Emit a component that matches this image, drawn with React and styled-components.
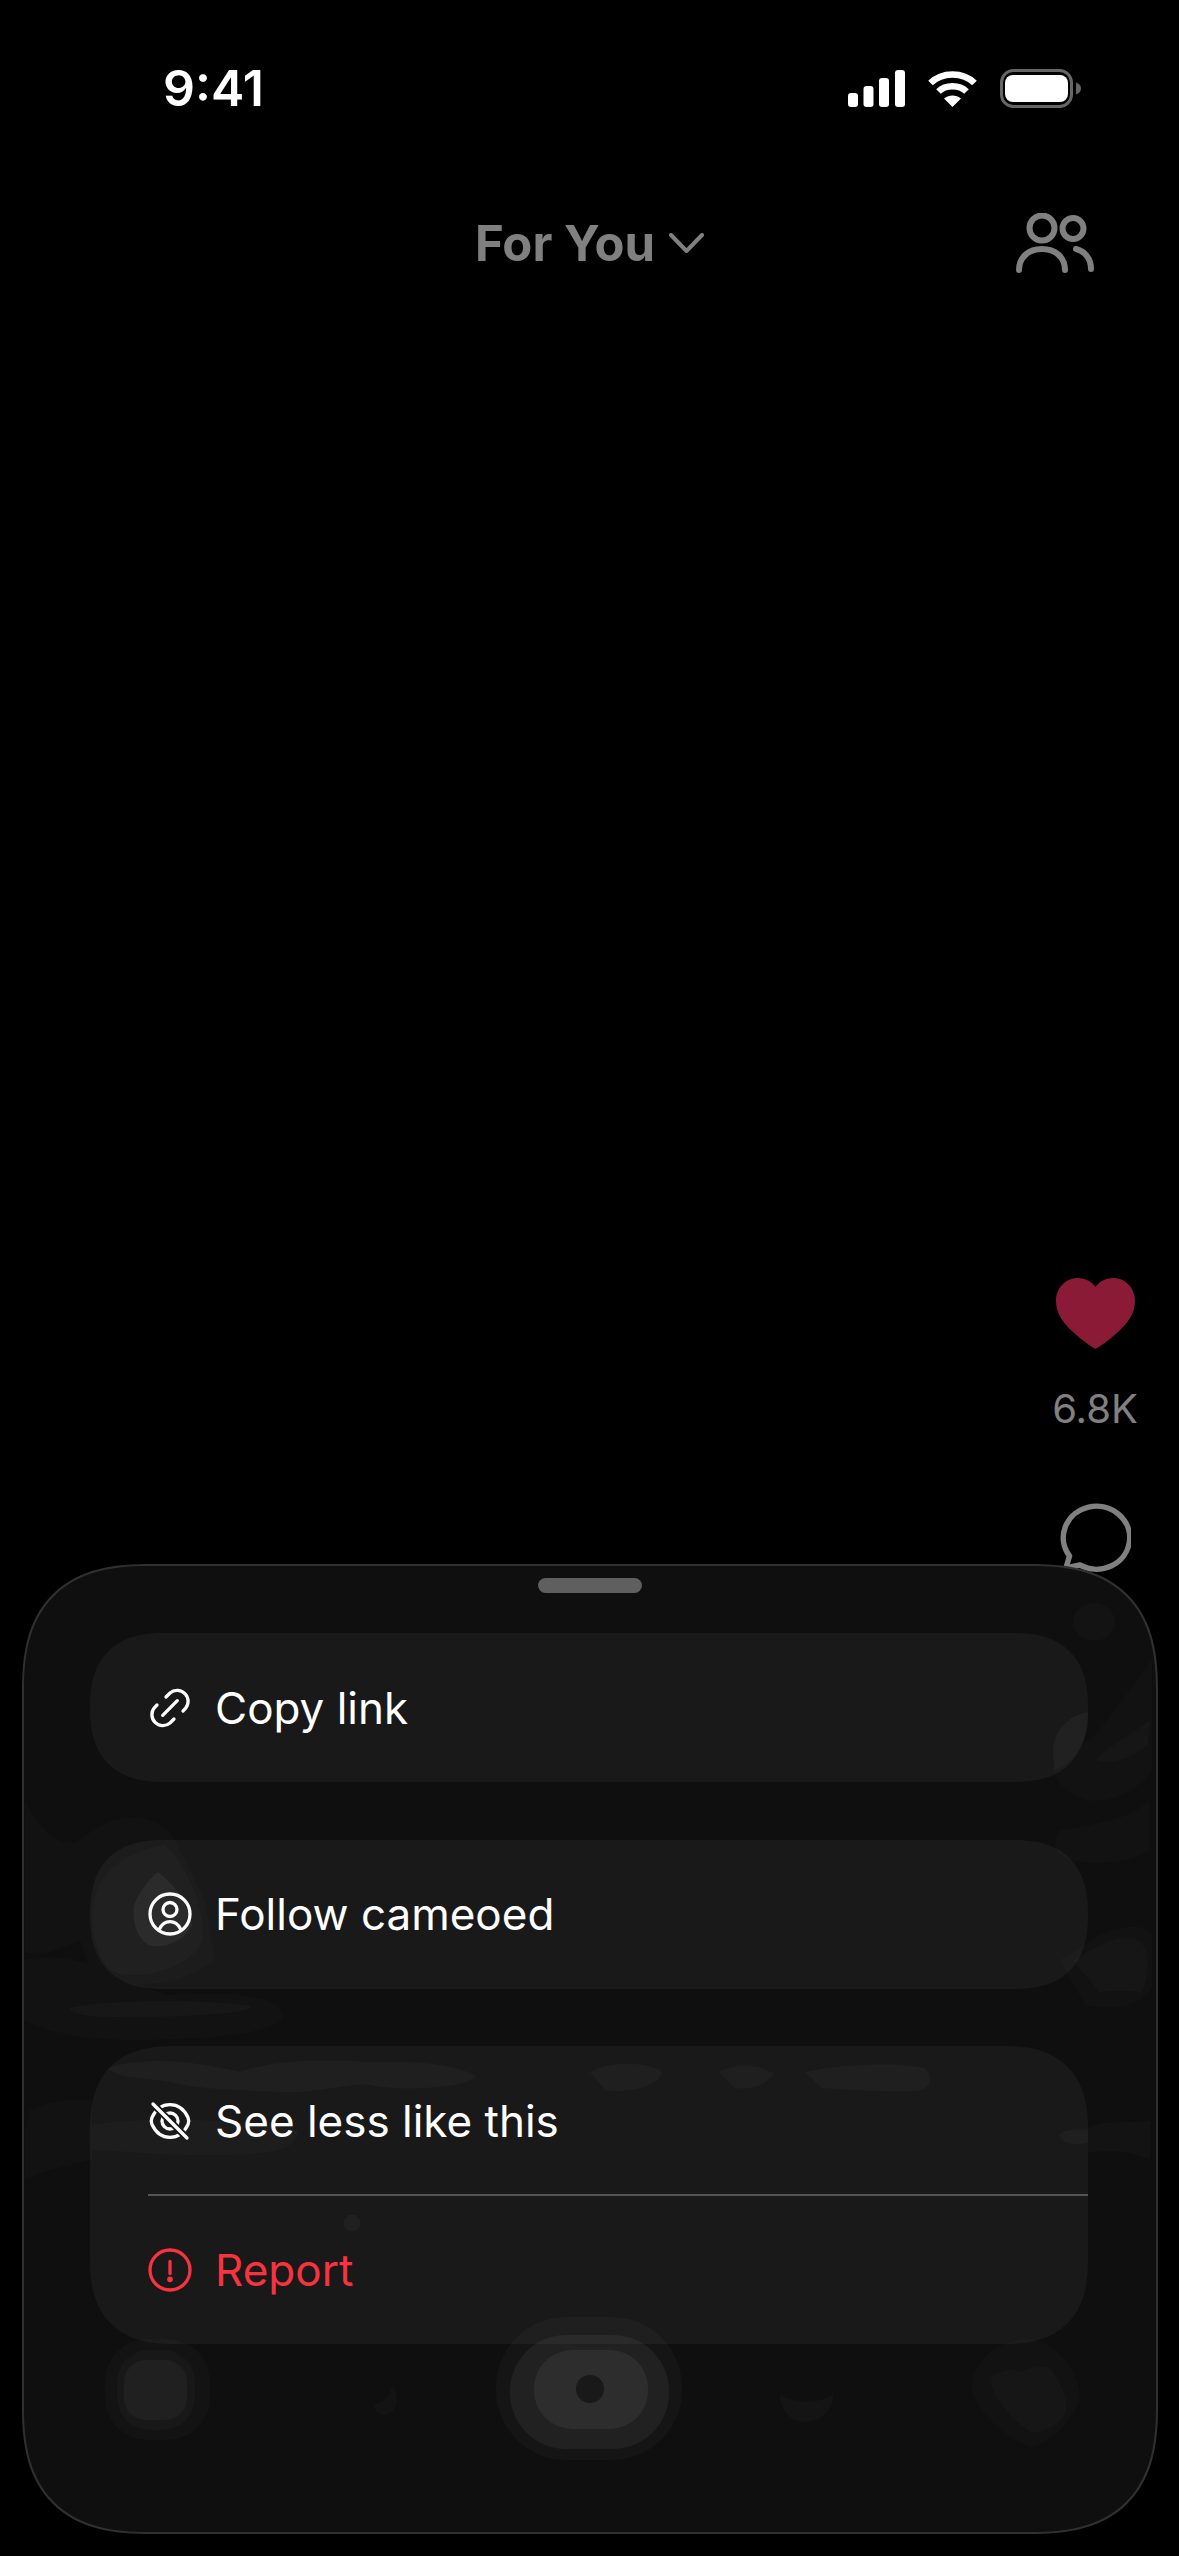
import styled, { createGlobalStyle } from "styled-components"

const GlobalStyle = createGlobalStyle`
    html, body {
        margin: 0;
        padding: 0;
        background: #000;
    }
`

const SignalIcon = () => (
    <svg width="57" height="37" viewBox="0 0 57 37" fill="#fff">
        <rect x="0" y="23" width="10" height="14" rx="3" />
        <rect x="15.5" y="16" width="10" height="21" rx="3" />
        <rect x="31" y="8" width="10" height="29" rx="3" />
        <rect x="47" y="0" width="10" height="37" rx="3" />
    </svg>
)

const WifiIcon = () => (
    <svg width="51" height="37" viewBox="0 0 51 37" fill="none" stroke="#fff" strokeWidth="6.5">
        <path d="M3.5 13C15 1.5 36 1.5 47.5 13" />
        <path d="M11.5 21.5C18.5 14.5 32.5 14.5 39.5 21.5" />
        <path d="M25.5 37L17 28.5C22 24.5 29 24.5 34 28.5Z" fill="#fff" stroke="none" />
    </svg>
)

const BatteryIcon = () => (
    <svg width="81" height="39" viewBox="0 0 81 39">
        <rect x="1.5" y="1.5" width="70" height="36" rx="12" fill="none" stroke="#666" strokeWidth="3" />
        <rect x="5" y="6" width="63" height="27" rx="8" fill="#fff" />
        <path d="M76 13.5C79 14.5 81 16.5 81 19.5C81 22.5 79 24.5 76 25.5Z" fill="#666" />
    </svg>
)

const ChevronIcon = () => (
    <svg width="35" height="20" viewBox="0 0 35 20" fill="none" stroke="#808080" strokeWidth="4" strokeLinecap="round" strokeLinejoin="round">
        <path d="M2 2L17.5 18L33 2" />
    </svg>
)

const PeopleIcon = () => (
    <svg width="78" height="60" viewBox="0 0 78 60" fill="none" stroke="#808080" strokeWidth="6" strokeLinecap="round">
        <circle cx="26" cy="15" r="12.5" />
        <circle cx="57" cy="15.5" r="10.5" />
        <path d="M3 57C3 44 13 36 26 36S49 44 49 57" />
        <path d="M60 36C69 38 75 46 75 56" />
    </svg>
)

const HeartIcon = () => (
    <svg width="79" height="71" viewBox="0 0 79 71" fill="#8a1a35">
        <path d="M39.5 71C36 69 26 62.5 17 54C7 45 0 35.5 0 23C0 10 9.5 0 22 0C29.5 0 35.5 3.5 39.5 9C43.5 3.5 49.5 0 57 0C69.5 0 79 10 79 23C79 35.5 72 45 62 54C53 62.5 43 69 39.5 71Z" />
    </svg>
)

const CommentIcon = () => (
    <svg width="72" height="72" viewBox="0 0 72 72" fill="none" stroke="#808080" strokeWidth="5.5" strokeLinejoin="round">
        <path d="M10.5 53A33.2 31.5 0 1 1 21 62L7 65Z" />
    </svg>
)

const LinkIcon = () => (
    <svg width="48" height="48" viewBox="0 0 48 48" fill="none" stroke="#fff" strokeWidth="3.3" strokeLinecap="round">
        <path d="M20 13L24 9A11 11 0 0 1 39.5 24.5L37 27" />
        <path d="M28 35L24 39A11 11 0 0 1 8.5 23.5L11 21" />
        <path d="M16.7 31.3L31.3 16.7" />
    </svg>
)

const ProfileIcon = () => (
    <svg width="48" height="48" viewBox="0 0 48 48" fill="none" stroke="#fff" strokeWidth="3.3" strokeLinecap="round">
        <circle cx="24" cy="24" r="20" />
        <circle cx="24" cy="19.5" r="7" />
        <path d="M13.5 39C16 34 20 31.7 24 31.7S32 34 34.5 39" />
    </svg>
)

const EyeOffIcon = () => (
    <svg width="48" height="48" viewBox="0 0 48 48" fill="none" stroke="#fff" strokeWidth="3.3" strokeLinecap="round">
        <path d="M6 20.5C10 12 17 7.7 24 7.7S38 12 42 20.5Q43.5 24 42 27.5C38 36 31 40.3 24 40.3S10 36 6 27.5Q4.5 24 6 20.5Z" />
        <circle cx="24" cy="24" r="8" />
        <path d="M7 7L41 41" stroke="#1a1a1a" strokeWidth="7" />
        <path d="M7 7L41 41" />
    </svg>
)

const AlertIcon = () => (
    <svg width="48" height="48" viewBox="0 0 48 48" fill="none" stroke="#f8333f" strokeWidth="3.3" strokeLinecap="round">
        <circle cx="24" cy="24" r="20" />
        <path d="M24 15.5V27.5" />
        <circle cx="24" cy="33.3" r="1.2" fill="#f8333f" />
    </svg>
)

// blurred video showing through the sheet, coordinates are page pixels
const SheetBackdrop = () => (
    <Backdrop viewBox="22 1564 1136 970" preserveAspectRatio="none">
        <ellipse cx="1094" cy="1622" rx="21" ry="19" fill="#131313" />
        <path d="M1053 1770C1062 1750 1090 1750 1110 1715C1130 1690 1145 1670 1152 1660V1770C1140 1790 1110 1805 1085 1800C1070 1795 1058 1785 1053 1770Z" fill="#121212" />
        <path d="M1095 1760C1110 1765 1130 1760 1148 1745L1150 1720C1130 1735 1110 1745 1095 1760Z" fill="#161616" />
        <path d="M1088 1712C1065 1716 1053 1735 1053 1750L1054 1770C1070 1768 1085 1745 1088 1725Z" fill="#171717" />
        <path d="M1060 1830C1090 1825 1130 1820 1150 1800V1850C1130 1865 1090 1865 1070 1860C1052 1855 1052 1838 1060 1830Z" fill="#121212" />
        <path d="M1060 1960L1100 1935C1130 1923 1148 1925 1152 1935V1985C1148 2005 1110 2012 1085 2005Z" fill="#121212" />
        <path d="M1073 1960L1100 1945C1120 1935 1140 1935 1146 1950C1150 1965 1146 1985 1142 1993C1130 1990 1110 1990 1100 1993Z" fill="#161616" />

        <path d="M25 1800C40 1830 60 1850 80 1840C110 1815 150 1805 175 1840L205 1900L215 1960C180 1990 120 1990 90 1970L80 1940C60 1950 30 1960 25 1950Z" fill="#121212" />
        <path d="M92 1910C95 1870 130 1850 165 1845C190 1870 205 1910 203 1940C195 1965 140 1985 110 1970C95 1955 92 1930 92 1910Z" fill="#161616" />
        <path d="M134 1905C140 1890 150 1878 158 1872C175 1885 190 1905 192 1925C185 1940 165 1950 148 1945C135 1935 132 1920 134 1905Z" fill="#222" />
        <path d="M23 1960C80 1945 140 1990 170 1995C230 1990 280 1995 283 2015C280 2035 200 2040 130 2040C80 2040 40 2030 23 2020Z" fill="#121212" />
        <path d="M69 2008C100 2000 200 1998 252 2006C250 2014 180 2018 100 2017C80 2016 72 2012 69 2008Z" fill="#171717" />

        <path d="M107 2068C150 2055 200 2062 240 2072C270 2060 330 2058 370 2062C420 2060 460 2066 476 2076C470 2088 400 2092 370 2085C350 2082 320 2094 280 2092C240 2090 200 2090 170 2082C150 2078 120 2080 107 2068Z" fill="#151515" />
        <path d="M590 2072C610 2060 650 2062 662 2072C660 2088 620 2094 605 2090Z" fill="#151515" />
        <path d="M719 2072C735 2063 760 2064 774 2074C765 2088 745 2090 735 2088Z" fill="#151515" />
        <path d="M805 2072C830 2066 890 2060 925 2068C935 2078 930 2090 915 2091C880 2092 845 2090 822 2088Z" fill="#151515" />
        <path d="M92 2125C150 2115 250 2120 298 2130C300 2150 270 2156 200 2155C150 2155 110 2150 92 2150Z" fill="#131313" />
        <path d="M30 2110C50 2100 70 2098 92 2100V2160C70 2165 45 2170 25 2180V2130Z" fill="#121212" />
        <path d="M1059 2135C1065 2128 1080 2130 1088 2130V2143C1075 2146 1062 2144 1059 2135Z" fill="#151515" />
        <path d="M1088 2128C1105 2118 1130 2125 1150 2120V2160C1130 2150 1105 2150 1088 2153Z" fill="#131313" />
        <circle cx="352" cy="2223" r="8.5" fill="#161616" />

        <g transform="translate(0 2)">
            <rect x="105" y="2337" width="105" height="101" rx="42" fill="#131313" />
            <rect x="117" y="2348" width="78" height="80" rx="32" fill="#181818" />
            <rect x="124" y="2358" width="63" height="60" rx="22" fill="#202020" />
            <path d="M392 2383C400 2395 398 2410 385 2413C378 2413 374 2408 373 2402C382 2402 390 2395 392 2383Z" fill="#131313" />

            <rect x="496" y="2315" width="186" height="143" rx="70" fill="#151515" />
            <rect x="510" y="2333" width="159" height="114" rx="56" fill="#212121" />
            <rect x="534" y="2348" width="114" height="79" rx="38" fill="#2d2d2d" />
            <circle cx="590" cy="2387" r="14" fill="#191919" />

            <path d="M780 2392C795 2402 820 2402 833 2392C834 2408 820 2420 805 2420C790 2420 780 2408 780 2392Z" fill="#141414" />
            <path d="M971 2385C975 2355 1000 2337 1030 2337C1060 2340 1080 2375 1080 2395C1075 2420 1045 2445 1030 2445C1005 2435 975 2410 971 2385Z" fill="#121212" />
            <path d="M991 2375C1000 2368 1015 2366 1020 2370C1030 2365 1045 2362 1052 2368C1062 2385 1070 2400 1065 2412C1058 2425 1040 2432 1030 2430C1015 2420 990 2395 991 2375Z" fill="#161616" />
        </g>
    </Backdrop>
)

const App = () => {
    return (
        <>
            <GlobalStyle />
            <Page>
                <StatusBar>
                    <Time>9:41</Time>
                    <StatusIcons>
                        <SignalIcon />
                        <WifiIcon />
                        <BatteryIcon />
                    </StatusIcons>
                </StatusBar>
                <Header>
                    <span />
                    <FeedTitle>
                        For You
                        <ChevronIcon />
                    </FeedTitle>
                    <PeopleButton>
                        <PeopleIcon />
                    </PeopleButton>
                </Header>
                <Rail>
                    <HeartIcon />
                    <Count>6.8K</Count>
                    <CommentIcon />
                </Rail>
                <Sheet>
                    <SheetBackdrop />
                    <Handle />
                    <Actions>
                        <Card>
                            <ActionRow>
                                <LinkIcon />
                                Copy link
                            </ActionRow>
                        </Card>
                        <Card>
                            <ActionRow>
                                <ProfileIcon />
                                Follow cameoed
                            </ActionRow>
                        </Card>
                        <Card>
                            <ActionRow>
                                <EyeOffIcon />
                                See less like this
                            </ActionRow>
                            <Divider />
                            <ActionRow $danger>
                                <AlertIcon />
                                Report
                            </ActionRow>
                        </Card>
                    </Actions>
                    <BottomGlow />
                </Sheet>
            </Page>
        </>
    )
}

export default App

const Page = styled.div`
    position: relative;
    display: flex;
    flex-direction: column;
    width: 1179px;
    height: 2556px;
    overflow: hidden;
    background: #000;
    font-family: Inter, "Liberation Sans", sans-serif;
`

const StatusBar = styled.div`
    display: flex;
    align-items: center;
    justify-content: space-between;
    box-sizing: border-box;
    height: 176px;
    padding: 0 98px 0 163px;
`

const Time = styled.div`
    color: #fff;
    font-size: 50px;
    font-weight: 600;
`

const StatusIcons = styled.div`
    display: flex;
    align-items: center;
    gap: 22px;
`

const Header = styled.div`
    display: grid;
    grid-template-columns: 1fr auto 1fr;
    align-items: center;
    height: 134px;
`

const FeedTitle = styled.div`
    display: flex;
    align-items: center;
    gap: 14px;
    color: #808080;
    font-size: 49px;
    font-weight: 700;
`

const PeopleButton = styled.div`
    display: flex;
    justify-content: flex-end;
    padding-right: 85px;
`

const Rail = styled.div`
    display: flex;
    flex-direction: column;
    align-items: center;
    align-self: flex-end;
    width: 100px;
    margin: 968px 34px 0 0;
`

const Count = styled.div`
    margin: 36px 0 70px;
    color: #808080;
    font-size: 40px;
    line-height: 48px;
`

const Sheet = styled.div`
    position: absolute;
    left: 22px;
    bottom: 22px;
    display: flex;
    flex-direction: column;
    align-items: center;
    box-sizing: border-box;
    width: 1136px;
    height: 970px;
    overflow: hidden;
    background: #0f0f0f;
    border: 2px solid #303030;
    border-radius: 128px;
    corner-shape: superellipse(1.35);
`

const Backdrop = styled.svg`
    position: absolute;
    inset: -2px;
    width: 1136px;
    height: 970px;
`

const Handle = styled.div`
    position: relative;
    flex: none;
    width: 104px;
    height: 15px;
    margin-top: 12px;
    background: #5f5f5f;
    border-radius: 8px;
`

const Actions = styled.div`
    position: relative;
    display: flex;
    flex-direction: column;
    gap: 57.5px;
    align-self: stretch;
    margin: 40px 68px 0 66px;
`

const Card = styled.div`
    background: rgba(255, 255, 255, 0.043);
    border-radius: 84px;
    corner-shape: superellipse(1.3);
`

const ActionRow = styled.div`
    display: flex;
    align-items: center;
    gap: 21px;
    height: 149px;
    padding-left: 56px;
    color: ${(props) => (props.$danger ? "#f8333f" : "#fff")};
    font-size: 44px;
`

const Divider = styled.div`
    height: 2px;
    margin: -1px 0 -1px 58px;
    background: #555;
`

const BottomGlow = styled.div`
    position: absolute;
    left: 485px;
    bottom: -2px;
    width: 165px;
    height: 2px;
    background: linear-gradient(90deg, #303030, #6a6a6a 50%, #303030);
`
